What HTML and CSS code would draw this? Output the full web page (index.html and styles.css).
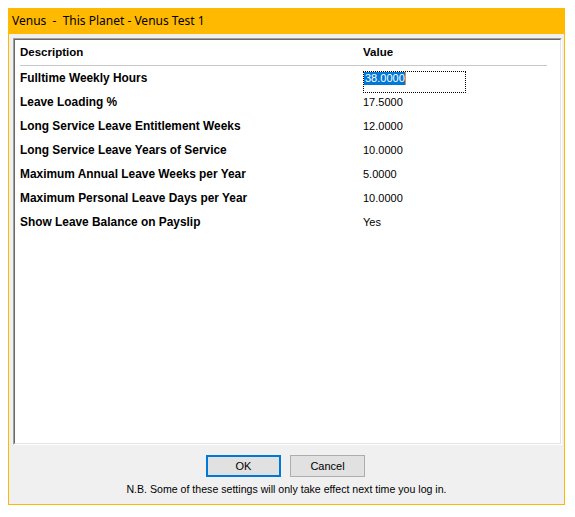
FILE: index.html
```html
<!DOCTYPE html>
<html lang="en">
<head>
    <meta charset="UTF-8">
    <meta name="viewport" content="width=device-width, initial-scale=1.0">
    <title>Venus - This Planet - Venus Test 1</title>
    <link rel="stylesheet" href="styles.css">
</head>
<body>

<div class="window">
    <div class="title-bar">Venus&nbsp; -&nbsp; This Planet - Venus Test 1</div>

    <div class="client">
        <div class="list-outer">
            <div class="list">
                <div class="list-head">
                    <div class="col-desc">Description</div>
                    <div class="col-value">Value</div>
                </div>
                <div class="list-rule"></div>

                <div class="list-row">
                    <div class="col-desc">Fulltime Weekly Hours</div>
                    <div class="col-value">
                        <div class="editor"><span class="selected">38.0000</span><span class="caret"></span></div>
                    </div>
                </div>
                <div class="list-row">
                    <div class="col-desc">Leave Loading %</div>
                    <div class="col-value">17.5000</div>
                </div>
                <div class="list-row">
                    <div class="col-desc">Long Service Leave Entitlement Weeks</div>
                    <div class="col-value">12.0000</div>
                </div>
                <div class="list-row">
                    <div class="col-desc">Long Service Leave Years of Service</div>
                    <div class="col-value">10.0000</div>
                </div>
                <div class="list-row">
                    <div class="col-desc">Maximum Annual Leave Weeks per Year</div>
                    <div class="col-value">5.0000</div>
                </div>
                <div class="list-row">
                    <div class="col-desc">Maximum Personal Leave Days per Year</div>
                    <div class="col-value">10.0000</div>
                </div>
                <div class="list-row">
                    <div class="col-desc">Show Leave Balance on Payslip</div>
                    <div class="col-value">Yes</div>
                </div>
            </div>
        </div>

        <div class="buttons">
            <button class="btn btn-default">OK</button>
            <button class="btn">Cancel</button>
        </div>

        <div class="note">N.B. Some of these settings will only take effect next time you log in.</div>
    </div>
</div>

</body>
</html>
```

FILE: styles.css
```css
body {
    margin: 0;
    background: #ffffff;
    font-family: "Liberation Sans", Arial, sans-serif;
}
.window {
    margin: 8px 0 0 8px;
    width: 555px;
    height: 496px;
    border: 1px solid #ffb900;
    border-top: none;
    display: flex;
    flex-direction: column;
}
.title-bar {
    height: 26px;
    line-height: 26px;
    background: #ffb900;
    padding-left: 4px;
    margin: 0 -1px;
    font-family: "Noto Sans", "Open Sans", sans-serif;
    font-size: 12px;
    color: #000000;
}
.client {
    flex: 1;
    background: #f0f0f0;
    padding: 4px 2px 0 4px;
    display: flex;
    flex-direction: column;
}
.list-outer {
    height: 405px;
    border-style: solid;
    border-width: 1px;
    border-color: #a0a0a0 #ffffff #ffffff #a0a0a0;
    display: flex;
}
.list {
    flex: 1;
    background: #ffffff;
    border-style: solid;
    border-width: 1px;
    border-color: #696969 #e3e3e3 #e3e3e3 #696969;
    padding: 0 12px 0 5px;
}
.list-head, .list-row {
    display: flex;
    height: 24px;
    align-items: center;
}
.list-head {
    height: 25px;
    padding-bottom: 1px;
    box-sizing: border-box;
    font-weight: bold;
    font-size: 11.5px;
}
.list-rule {
    height: 1px;
    background: #c8c8c8;
    margin-right: 1px;
}
.list-row {
    font-size: 11px;
}
.list-row .col-desc {
    font-weight: bold;
    font-size: 11.9px;
}
.col-desc {
    width: 343px;
    white-space: nowrap;
}
.col-value {
    flex: 1;
    align-self: stretch;
    display: flex;
    align-items: center;
}
.editor {
    align-self: flex-start;
    margin-top: 5px;
    margin-bottom: -3px;
    width: 101px;
    height: 20px;
    border: 1px dotted #000000;
    display: flex;
    align-items: flex-start;
}
.selected {
    background: #0078d7;
    color: #ffffff;
    line-height: 13px;
    padding-left: 1px;
}
.caret {
    width: 1px;
    height: 13px;
    background: #ff8728;
}
.buttons {
    display: flex;
    justify-content: center;
    gap: 9px;
    margin-top: 10px;
    padding-right: 4px;
}
.btn {
    width: 75px;
    height: 22px;
    background: #e1e1e1;
    border: 1px solid #adadad;
    font-family: "Liberation Sans", Arial, sans-serif;
    font-size: 11px;
    color: #000000;
    padding: 0;
}
.btn-default {
    border: 2px solid #0078d7;
}
.note {
    margin-top: 6px;
    text-align: center;
    font-size: 10.6px;
    color: #000000;
    padding-right: 2px;
}
```
